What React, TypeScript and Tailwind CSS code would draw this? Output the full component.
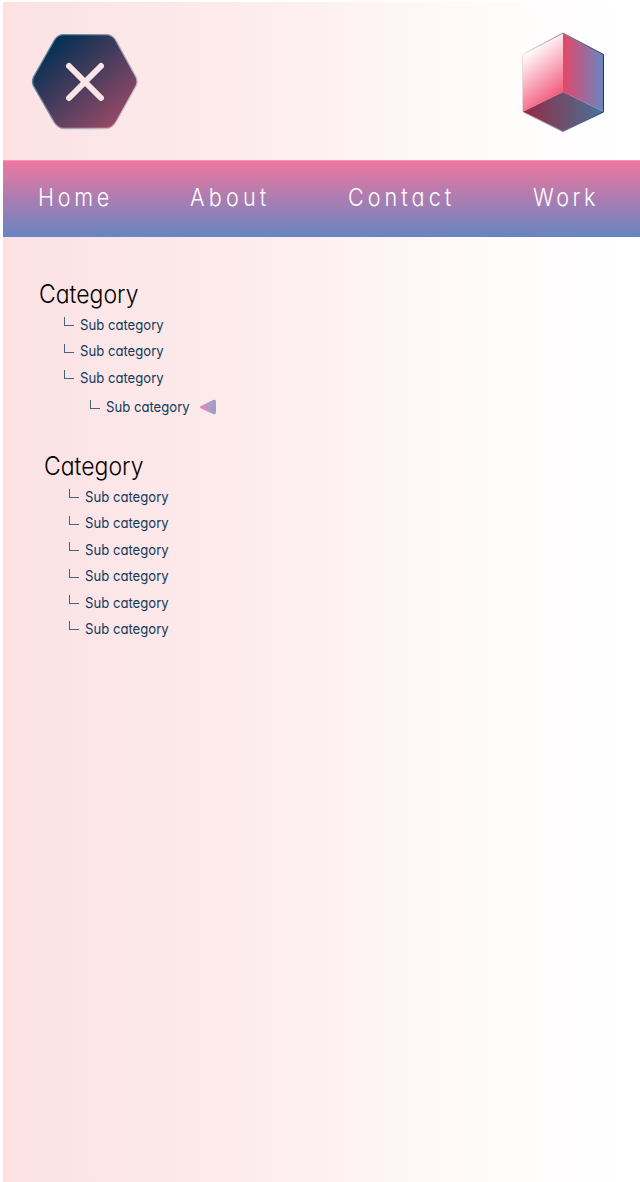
import React from "react";

function CloseLogo() {
  return (
    <svg width="108" height="98" viewBox="31 33 108 98" aria-label="Close">
      <defs>
        <linearGradient id="hex" x1="0.12" y1="0.12" x2="0.86" y2="0.92">
          <stop offset="0" stopColor="#002f54" />
          <stop offset="1" stopColor="#984a66" />
        </linearGradient>
        <linearGradient id="hexEdge" x1="0" y1="0.2" x2="1" y2="0.8">
          <stop offset="0" stopColor="#537d92" />
          <stop offset="1" stopColor="#d6bfca" />
        </linearGradient>
      </defs>
      <path
        d="M64 34.600H106Q112 34.600 115.500 40L136 77Q138.200 81.500 136 86L116 122Q112 128.500 106 128.500H64Q58 128.500 54 122L33.500 86Q31.500 81.500 33.500 77L54.500 40Q58 34.600 64 34.600Z"
        fill="url(#hex)"
        stroke="url(#hexEdge)"
        strokeWidth="1.3"
      />
      <path d="M69 66L101 98M101 66L69 98" stroke="#fce5e7" strokeWidth="6" strokeLinecap="round" />
    </svg>
  );
}

function CubeLogo() {
  return (
    <svg width="84" height="102" viewBox="521 31 84 102" aria-label="Cube">
      <defs>
        <linearGradient id="left" gradientUnits="userSpaceOnUse" x1="532" y1="48" x2="568" y2="94">
          <stop offset="0" stopColor="#fff" />
          <stop offset="1" stopColor="#f04c70" />
        </linearGradient>
        <linearGradient id="right" x1="0" x2="1">
          <stop offset="0" stopColor="#e34768" />
          <stop offset="1" stopColor="#6985c0" />
        </linearGradient>
        <linearGradient id="bottom" x1="0" x2="1">
          <stop offset="0" stopColor="#942a43" />
          <stop offset="1" stopColor="#477299" />
        </linearGradient>
        <linearGradient id="cubeEdge" x1="0" x2="1">
          <stop offset="0" stopColor="#f3d6dd" />
          <stop offset="0.5" stopColor="#858492" />
          <stop offset="1" stopColor="#123d66" />
        </linearGradient>
      </defs>
      <path d="M522.500 54.500L563 33V92L522.500 112Z" fill="url(#left)" />
      <path d="M563 33L603.500 54.500V112L563 92Z" fill="url(#right)" />
      <path d="M522.500 112L563 92L603.500 112L563 131.500Z" fill="url(#bottom)" />
      <path d="M522.500 54.500L563 33L603.500 54.500V112L563 131.500L522.500 112Z" fill="none" stroke="url(#cubeEdge)" />
    </svg>
  );
}

function SubCategory({ active = false, className = "h-[26.4px]" }: { active?: boolean; className?: string }) {
  return (
    <li className={`flex items-center ${className}`}>
      <span className="mr-[6px] mb-[6px] h-[9px] w-[10px] shrink-0 border-b border-l border-[#46637e]" />
      <span className="w-[84px] origin-left scale-x-[0.905] whitespace-nowrap text-[14.5px] leading-5 text-[#123b5b]">
        Sub category
      </span>
      {active && (
        <svg className="ml-[10px]" width="17" height="16" viewBox="0 0 17 16">
          <defs>
            <linearGradient id="arrow" x1="0" x2="1">
              <stop offset="0" stopColor="#f084c2" />
              <stop offset="1" stopColor="#8fa5c8" />
            </linearGradient>
          </defs>
          <path d="M1 7L13 1Q16 0 16 2.500V13Q16 16 13 15L1 9.500Q-1 8.200 1 7Z" fill="url(#arrow)" />
        </svg>
      )}
    </li>
  );
}

const headingClass = "origin-left scale-x-[0.92] w-[120px] whitespace-nowrap text-[25px] leading-[30px] font-[280] text-black";
const navClass = "origin-left scale-x-[0.88] whitespace-nowrap";

export default function App() {
  return (
    <div className="h-[1182px] w-full overflow-hidden bg-white pt-[2px] pl-[3px] font-['Inter',sans-serif] [font-feature-settings:'cv11']">
      <div className="h-full bg-[linear-gradient(90deg,#ffdfe1_0px,#fce2e4_16px,#fce6e8_110px,#fdebec_230px,#fef1f2_330px,#fef7f7_420px,#fffcfc_510px,#ffffff_637px)]">
        <header className="flex h-[158px] items-start justify-between pt-[29px] pr-[35px] pl-[28px]">
          <div className="pt-[2px]"><CloseLogo /></div>
          <CubeLogo />
        </header>
        <nav className="flex h-[77px] items-center border-t border-[#f097b5] bg-[linear-gradient(#ee77a0,#a47eb3_55%,#6785c1)] pb-[4px] pl-[34.5px] text-[24.5px] font-[260] text-white">
          <a className={`${navClass} w-[152px] tracking-[4.2px]`}>Home</a>
          <a className={`${navClass} w-[158px] tracking-[4.8px]`}>About</a>
          <a className={`${navClass} w-[185px] tracking-[4.6px]`}>Contact</a>
          <a className={`${navClass} tracking-[4px]`}>Work</a>
        </nav>
        <main className="pt-[42px]">
          <section className="pl-[36px]">
            <h2 className={headingClass}>Category</h2>
            <ul className="pt-[2.6px] pl-[25px]">
              <SubCategory />
              <SubCategory />
              <SubCategory />
              <SubCategory active className="h-[31.4px] pt-[2px] pl-[26px]" />
            </ul>
          </section>
          <section className="pt-[29px] pl-[41px]">
            <h2 className={headingClass}>Category</h2>
            <ul className="pt-[2.6px] pl-[25px]">
              <SubCategory />
              <SubCategory />
              <SubCategory />
              <SubCategory />
              <SubCategory />
              <SubCategory />
            </ul>
          </section>
        </main>
      </div>
    </div>
  );
}
